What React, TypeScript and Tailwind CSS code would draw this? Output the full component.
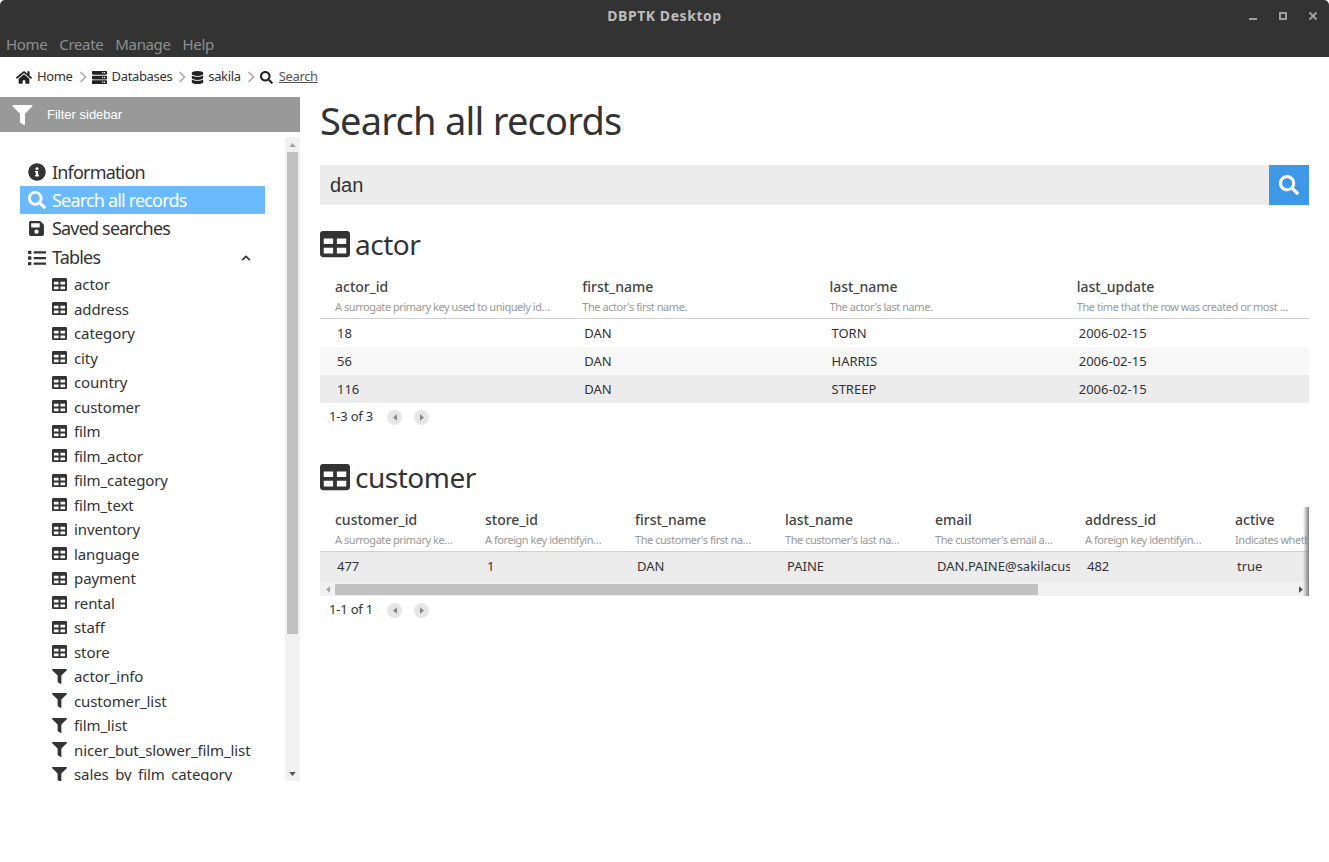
import { type JSX, type ReactNode } from 'react';
import {
    FaChevronUp,
    FaDatabase,
    FaFilter,
    FaHome,
    FaInfoCircle,
    FaList,
    FaSave,
    FaSearch,
    FaServer,
    FaTable,
} from 'react-icons/fa';

const tables = [
    'actor', 'address', 'category', 'city', 'country', 'customer', 'film', 'film_actor',
    'film_category', 'film_text', 'inventory', 'language', 'payment', 'rental', 'staff', 'store',
];
const views = ['actor_info', 'customer_list', 'film_list', 'nicer_but_slower_film_list', 'sales_by_film_category'];

const actorColumns = [
    ['actor_id', 'A surrogate primary key used to uniquely identify each actor in the table.'],
    ['first_name', "The actor's first name."],
    ['last_name', "The actor's last name."],
    ['last_update', 'The time that the row was created or most recently updated.'],
];
const actorRows = [
    ['18', 'DAN', 'TORN', '2006-02-15'],
    ['56', 'DAN', 'HARRIS', '2006-02-15'],
    ['116', 'DAN', 'STREEP', '2006-02-15'],
];
const customerColumns = [
    ['customer_id', 'A surrogate primary key used to uniquely identify'],
    ['store_id', 'A foreign key identifying the customer home store'],
    ['first_name', "The customer's first name."],
    ['last_name', "The customer's last name."],
    ['email', "The customer's email address."],
    ['address_id', 'A foreign key identifying the customer address'],
    ['active', 'Indicates whether the customer is active'],
];
const customerRow = ['477', '1', 'DAN', 'PAINE', 'DAN.PAINE@sakilacustomer.org', '482', 'true'];

function Crumb({ icon, label, last }: { icon: ReactNode; label: string; last?: boolean }): JSX.Element {
    return (
        <>
            <span className="text-[#222]">{icon}</span>
            <span className={last ? 'text-[#555] underline' : 'text-[#333]'}>{label}</span>
            {!last && (
                <svg viewBox="0 0 8 12" className="ml-[6px] mr-[5px] h-[12px] w-[8px]" fill="none" stroke="#aaa" strokeWidth="1.6">
                    <path d="M1.5 1l5 5-5 5" />
                </svg>
            )}
        </>
    );
}

function TopItem({ icon, label, height, active, children }: { icon: ReactNode; label: string; height: string; active?: boolean; children?: ReactNode }): JSX.Element {
    return (
        <div className={`flex ${height} items-center pl-[8px] text-[18px] ${active ? 'bg-[#6bb9ff] text-white' : 'text-[#333]'}`}>
            <span className="flex w-[24px] shrink-0">{icon}</span>
            <span className="tracking-[-0.82px]">{label}</span>
            {children}
        </div>
    );
}

function SubItem({ icon, label }: { icon: ReactNode; label: string }): JSX.Element {
    return (
        <div className="flex h-[24.5px] items-center pl-[32px] text-[15px] tracking-[-0.1px] text-[#333]">
            <span className="flex w-[22px] shrink-0 text-[#333]">{icon}</span>
            <span className="whitespace-nowrap">{label}</span>
        </div>
    );
}

function Sidebar(): JSX.Element {
    return (
        <aside className="w-[300px] shrink-0">
            <div className="flex h-[35px] items-center bg-[#999] pl-[12px] font-['Liberation_Sans',sans-serif] text-[13px] text-white">
                <FaFilter className="h-[20px] w-[21px]" />
                <span className="ml-[14px]">Filter sidebar</span>
            </div>
            <div className="flex h-[649px] pt-[5px]">
                <div className="min-w-0 flex-1 overflow-hidden pt-[21px] pl-[20px] pr-[20px]">
                    <TopItem height="h-[28px]" icon={<FaInfoCircle className="h-[18px] w-[18px]" />} label="Information" />
                    <TopItem height="h-[28px]" icon={<FaSearch className="h-[18px] w-[18px]" />} label="Search all records" active />
                    <TopItem height="h-[29px]" icon={<FaSave className="h-[17px] w-[17px]" />} label="Saved searches" />
                    <TopItem height="h-[29px]" icon={<FaList className="h-[18px] w-[18px]" />} label="Tables">
                        <FaChevronUp className="ml-auto mr-[14px] h-[10px] w-[10px]" />
                    </TopItem>
                    {tables.map((t) => (
                        <SubItem key={t} label={t} icon={<FaTable className="h-[15px] w-[15px]" />} />
                    ))}
                    {views.map((v) => (
                        <SubItem key={v} label={v} icon={<FaFilter className="h-[15px] w-[15px]" />} />
                    ))}
                </div>
                <div className="flex w-[15px] shrink-0 flex-col bg-[#f1f1f1]">
                    <div className="flex h-[15px] items-center justify-center">
                        <svg viewBox="0 0 8 5" className="h-[4px] w-[7px]" fill="#a3a3a3">
                            <path d="M0 5h8L4 0z" />
                        </svg>
                    </div>
                    <div className="mx-[2px] h-[482px] bg-[#c1c1c1]" />
                    <div className="flex flex-1 items-end justify-center pb-[5px]">
                        <svg viewBox="0 0 8 5" className="h-[4px] w-[7px]" fill="#505050">
                            <path d="M0 0h8L4 5z" />
                        </svg>
                    </div>
                </div>
            </div>
        </aside>
    );
}

function Pager({ label }: { label: string }): JSX.Element {
    return (
        <div className="flex h-[28px] items-center pl-[9px] text-[13px] tracking-[-0.2px] text-[#333]">
            <span className="w-[58px]">{label}</span>
            <span className="flex h-[15px] w-[15px] items-center justify-center rounded-full bg-[#e6e6e6]">
                <svg viewBox="0 0 5 8" className="h-[7px] w-[4px]" fill="#888"><path d="M5 0v8L0 4z" /></svg>
            </span>
            <span className="ml-[12px] flex h-[15px] w-[15px] items-center justify-center rounded-full bg-[#e6e6e6]">
                <svg viewBox="0 0 5 8" className="h-[7px] w-[4px]" fill="#888"><path d="M0 0v8l5-4z" /></svg>
            </span>
        </div>
    );
}

function HeaderCell({ name, desc, width }: { name: string; desc: string; width: string }): JSX.Element {
    return (
        <div className={`${width} shrink-0 pl-[15px] pr-[17px]`}>
            <div className="h-[22px] truncate text-[14px] font-medium leading-[22px] text-[#444]">{name}</div>
            <div className="mt-[1px] truncate text-[11px] leading-[16px] tracking-[-0.45px] text-[#999]">{desc}</div>
        </div>
    );
}

function Heading({ children }: { children: string }): JSX.Element {
    return (
        <h2 className="flex h-[40px] items-center text-[28px] leading-none tracking-[-0.5px] text-[#333]">
            <FaTable className="mr-[5px] h-[30px] w-[30px]" />
            {children}
        </h2>
    );
}

function ActorTable(): JSX.Element {
    return (
        <div className="mt-[10px]">
            <div className="flex h-[45px] items-end border-b border-[#d0d0d0] pb-[3px]">
                {actorColumns.map(([name, desc]) => (
                    <HeaderCell key={name} name={name} desc={desc} width="w-[247.25px]" />
                ))}
            </div>
            {actorRows.map((row, i) => (
                <div key={row[0]} className={`flex h-[28px] items-center pt-[1px] text-[13px] text-[#333] ${i === 1 ? 'bg-[#f8f8f8]' : i === 2 ? 'bg-[#ececec]' : 'bg-white'}`}>
                    {row.map((cell, j) => (
                        <div key={j} className="w-[247.25px] shrink-0 pl-[17px]">{cell}</div>
                    ))}
                </div>
            ))}
        </div>
    );
}

function CustomerTable(): JSX.Element {
    return (
        <div className="relative mt-[10px] overflow-hidden">
            <div className="flex h-[45px] items-end border-b border-[#d0d0d0] pb-[3px]">
                {customerColumns.map(([name, desc]) => (
                    <HeaderCell key={name} name={name} desc={desc} width="w-[150px]" />
                ))}
            </div>
            <div className="flex h-[30px] items-center bg-[#ececec] text-[13px] text-[#333]">
                {customerRow.map((cell, j) => (
                    <div key={j} className="w-[150px] shrink-0 overflow-hidden whitespace-nowrap pl-[17px] pr-[17px]">{cell}</div>
                ))}
            </div>
            <div className="flex h-[14px] items-center bg-[#f1f1f1]">
                <div className="flex w-[15px] shrink-0 justify-center">
                    <svg viewBox="0 0 5 8" className="h-[7px] w-[4px]" fill="#a3a3a3"><path d="M5 0v8L0 4z" /></svg>
                </div>
                <div className="h-[11px] w-[703px] bg-[#c1c1c1]" />
                <div className="ml-auto mr-[6px] flex">
                    <svg viewBox="0 0 5 8" className="h-[7px] w-[4px]" fill="#505050"><path d="M0 0v8l5-4z" /></svg>
                </div>
            </div>
            <div className="absolute right-0 top-0 h-full w-[6px] bg-gradient-to-r from-transparent to-[#808080]" />
        </div>
    );
}

export default function App(): JSX.Element {
    return (
        <div className="flex h-[862px] w-[1329px] flex-col overflow-hidden bg-white font-['Noto_Sans',sans-serif]">
            <div className="relative flex h-[31px] shrink-0 items-center justify-center rounded-t-[5px] bg-[#333] text-[14px] font-bold tracking-[0.55px] text-[#bdbdbd]">
                DBPTK Desktop
                <div className="absolute right-[11px] top-[11px] flex gap-[20px]">
                    <svg viewBox="0 0 10 10" className="h-[10px] w-[10px]" fill="#a0a0a0"><rect x="1" y="7" width="8" height="2" /></svg>
                    <svg viewBox="0 0 10 10" className="h-[10px] w-[10px]" fill="none" stroke="#a0a0a0" strokeWidth="2"><rect x="2" y="2" width="6" height="6" /></svg>
                    <svg viewBox="0 0 10 10" className="h-[10px] w-[10px]" fill="none" stroke="#a0a0a0" strokeWidth="2"><path d="M1.5 1.5l7 7M8.5 1.5l-7 7" /></svg>
                </div>
            </div>
            <div className="flex h-[26px] shrink-0 items-center gap-[12px] bg-[#333] pl-[6px] text-[15px] tracking-[-0.35px] text-[#8f8f8f]">
                <span>Home</span>
                <span>Create</span>
                <span>Manage</span>
                <span>Help</span>
            </div>
            <div className="flex h-[40px] shrink-0 items-center pl-[16px] text-[13px] tracking-[-0.35px]">
                <Crumb icon={<FaHome className="mr-[5px] h-[15px] w-[16px]" />} label="Home" />
                <Crumb icon={<FaServer className="mr-[5px] h-[15px] w-[15px]" />} label="Databases" />
                <Crumb icon={<FaDatabase className="mr-[4px] h-[13px] w-[13px]" />} label="sakila" />
                <Crumb icon={<FaSearch className="mr-[6px] h-[13px] w-[13px]" />} label="Search" last />
            </div>
            <div className="flex min-h-0 flex-1">
                <Sidebar />
                <main className="min-w-0 flex-1 px-[20px]">
                    <h1 className="flex h-[46px] items-center text-[38px] leading-none tracking-[-0.75px] text-[#333]">Search all records</h1>
                    <div className="mt-[22px] flex h-[40px] bg-[#ececec] font-['Liberation_Sans',sans-serif]">
                        <div className="flex flex-1 items-center pl-[10px] text-[20px] text-[#333]">dan</div>
                        <div className="flex w-[40px] items-center justify-center bg-[#3d99e6] text-white">
                            <FaSearch className="h-[20px] w-[20px]" />
                        </div>
                    </div>
                    <div className="mt-[19px]"><Heading>actor</Heading></div>
                    <ActorTable />
                    <Pager label="1-3 of 3" />
                    <div className="mt-[26px]"><Heading>customer</Heading></div>
                    <CustomerTable />
                    <Pager label="1-1 of 1" />
                </main>
            </div>
        </div>
    );
}
